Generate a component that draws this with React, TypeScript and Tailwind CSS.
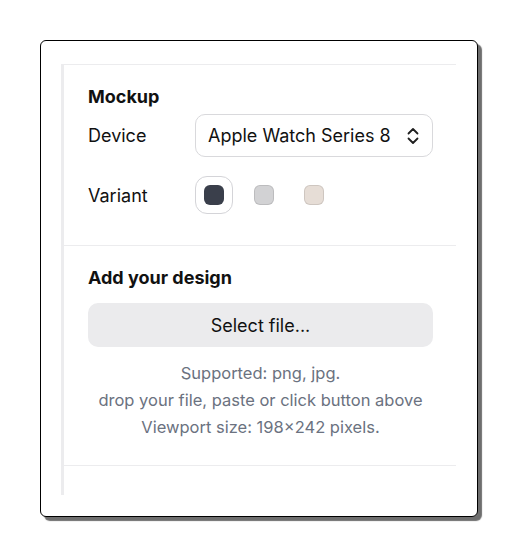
import { useState } from 'react'

const VARIANTS = [
  { id: 'midnight', color: 'bg-[#3a3f4b]' },
  { id: 'silver', color: 'bg-[#d2d2d4]' },
  { id: 'starlight', color: 'bg-[#e6ddd6]' },
]

function ChevronsUpDown() {
  return (
    <svg width="14" height="18" viewBox="0 0 14 18" fill="none" stroke="#1f1f1f" strokeWidth="1.8" strokeLinecap="round" strokeLinejoin="round">
      <path d="M2.5 6.5 7 2l4.5 4.5" />
      <path d="M2.5 11.5 7 16l4.5-4.5" />
    </svg>
  )
}

export default function App() {
  const [variant, setVariant] = useState('midnight')

  return (
    <div className="min-h-screen bg-white pt-10 pl-10 font-['Inter',sans-serif] text-[#111]">
      <div className="w-[438px] rounded-[6px] border border-black bg-white pl-[20px] pr-[18px] pt-[23px] pb-[21px] shadow-[4px_4px_1px_#6e6e6e]">
        <div className="h-[431px] w-[395px] border-l-[3px] border-t border-[#ececee]">
          <section className="border-b border-[#ececee] pl-6 pr-[23px] pt-5 pb-[31px]">
            <h2 className="text-[18px] font-bold leading-6">Mockup</h2>
            <div className="mt-[5px] flex items-center">
              <span className="w-[107px] text-[18px]">Device</span>
              <button className="flex h-[43px] flex-1 items-center justify-between rounded-[10px] border border-[#d9d9dc] pl-3 pr-3 text-[18px]">
                <span>Apple Watch Series 8</span>
                <ChevronsUpDown />
              </button>
            </div>
            <div className="mt-[19px] flex items-center">
              <span className="w-[107px] text-[18px]">Variant</span>
              <div className="flex items-center gap-3">
                {VARIANTS.map((v) => (
                  <button
                    key={v.id}
                    onClick={() => setVariant(v.id)}
                    className={`flex h-[38px] w-[38px] items-center justify-center rounded-[12px] border ${variant === v.id ? 'border-[#d4d4d8]' : 'border-transparent'}`}
                  >
                    <span className={`h-[20px] w-[20px] rounded-[6px] ${v.color} ${v.id === 'midnight' ? '' : 'border border-black/10'}`} />
                  </button>
                ))}
              </div>
            </div>
          </section>
          <section className="border-b border-[#ececee] pl-6 pr-[23px] pt-5 pb-6">
            <h2 className="text-[18px] font-bold leading-6">Add your design</h2>
            <button className="mt-[13px] h-[44px] w-full rounded-[10px] bg-[#ebebed] text-[18px]">Select file...</button>
            <p className="mt-[13px] text-center text-[16.5px] leading-[27px] text-[#6b7280]">
              Supported: png, jpg.
              <br />
              drop your file, paste or click button above
              <br />
              Viewport size: 198×242 pixels.
            </p>
          </section>
        </div>
      </div>
    </div>
  )
}
